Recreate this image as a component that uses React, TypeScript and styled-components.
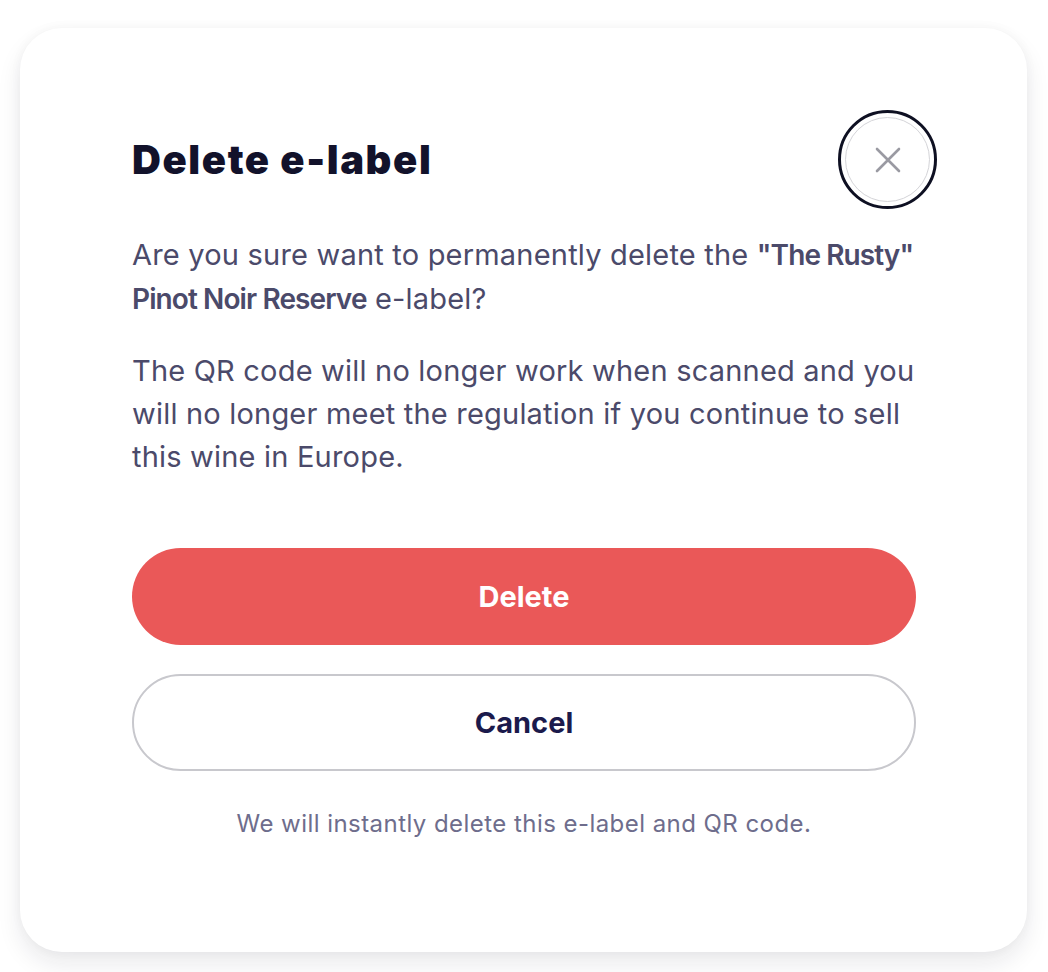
import { createGlobalStyle, styled } from "styled-components";

const GlobalStyle = createGlobalStyle`
  html, body {
    margin: 0;
    padding: 0;
    background: #ffffff;
  }
  body {
    font-family: Inter, "Noto Sans", sans-serif;
    -webkit-font-smoothing: antialiased;
  }
`;

const CloseIcon = () => (
  <svg width="28" height="28" viewBox="0 0 28 28" fill="none">
    <path
      d="M3 3L25 25M25 3L3 25"
      stroke="#9a9aa2"
      strokeWidth="2.6"
      strokeLinecap="round"
    />
  </svg>
);

export default function App() {
  return (
    <>
      <GlobalStyle />
      <StPage>
        <StCard>
          <StHeader>
            <StTitle>Delete e-label</StTitle>
            <StCloseButton aria-label="Close">
              <CloseIcon />
            </StCloseButton>
          </StHeader>

          <StBody>
            <StText>
              Are you sure want to permanently delete the{" "}
              <strong>"The Rusty" Pinot Noir Reserve</strong> e-label?
            </StText>
            <StText>
              The QR code will no longer work when scanned and you will no
              longer meet the regulation if you continue to sell this wine in
              Europe.
            </StText>
          </StBody>

          <StActions>
            <StButton $variant="danger">Delete</StButton>
            <StButton $variant="outline">Cancel</StButton>
          </StActions>

          <StFootnote>We will instantly delete this e-label and QR code.</StFootnote>
        </StCard>
      </StPage>
    </>
  );
}

interface StButtonProps {
  $variant: "danger" | "outline";
}

const StPage = styled.div`
  padding: 28px 21px 20px 20px;
`;

const StCard = styled.div`
  box-sizing: border-box;
  width: 1007px;
  height: 924px;
  padding: 82px 111px 0 112px;
  background: #ffffff;
  border-radius: 42px;
  box-shadow: 0 12px 24px rgba(20, 20, 40, 0.09), 0 0 12px rgba(20, 20, 40, 0.04);
  display: flex;
  flex-direction: column;
`;

const StHeader = styled.div`
  display: flex;
  align-items: center;
  justify-content: space-between;
  margin-right: -21px;
`;

const StTitle = styled.h1`
  margin: 0;
  font-size: 40px;
  font-weight: 900;
  line-height: 48px;
  color: #12122b;
  letter-spacing: 1.6px;
`;

const StCloseButton = styled.button`
  box-sizing: border-box;
  width: 99px;
  height: 99px;
  border-radius: 50%;
  border: 3px solid #0e1022;
  background: #ffffff;
  display: flex;
  align-items: center;
  justify-content: center;
  padding: 0;
  cursor: pointer;
  position: relative;

  &::after {
    content: "";
    position: absolute;
    inset: 4px;
    border-radius: 50%;
    border: 1px solid #d4d4d8;
  }
`;

const StBody = styled.div`
  display: flex;
  flex-direction: column;
  gap: 28px;
  margin-top: 24px;
`;

const StText = styled.p`
  margin: 0;
  font-size: 29px;
  line-height: 43px;
  color: #4b4a6a;
  letter-spacing: 0.2px;

  strong {
    font-size: 28px;
    font-weight: 600;
    letter-spacing: -0.9px;
  }
`;

const StActions = styled.div`
  display: flex;
  flex-direction: column;
  gap: 29px;
  margin-top: 70px;
`;

const StButton = styled.button<StButtonProps>`
  box-sizing: border-box;
  height: 97px;
  width: 100%;
  border-radius: 49px;
  font-family: Inter, "Noto Sans", sans-serif;
  font-size: 29px;
  font-weight: 700;
  cursor: pointer;
  background: ${(props) => (props.$variant === "danger" ? "#ea5858" : "#ffffff")};
  color: ${(props) => (props.$variant === "danger" ? "#ffffff" : "#1b1a4c")};
  border: ${(props) =>
    props.$variant === "danger" ? "none" : "2px solid #c8c8cd"};
`;

const StFootnote = styled.p`
  margin: 36px 0 0;
  text-align: center;
  font-size: 24px;
  line-height: 34px;
  letter-spacing: 0.45px;
  color: #6e6d8c;
`;
